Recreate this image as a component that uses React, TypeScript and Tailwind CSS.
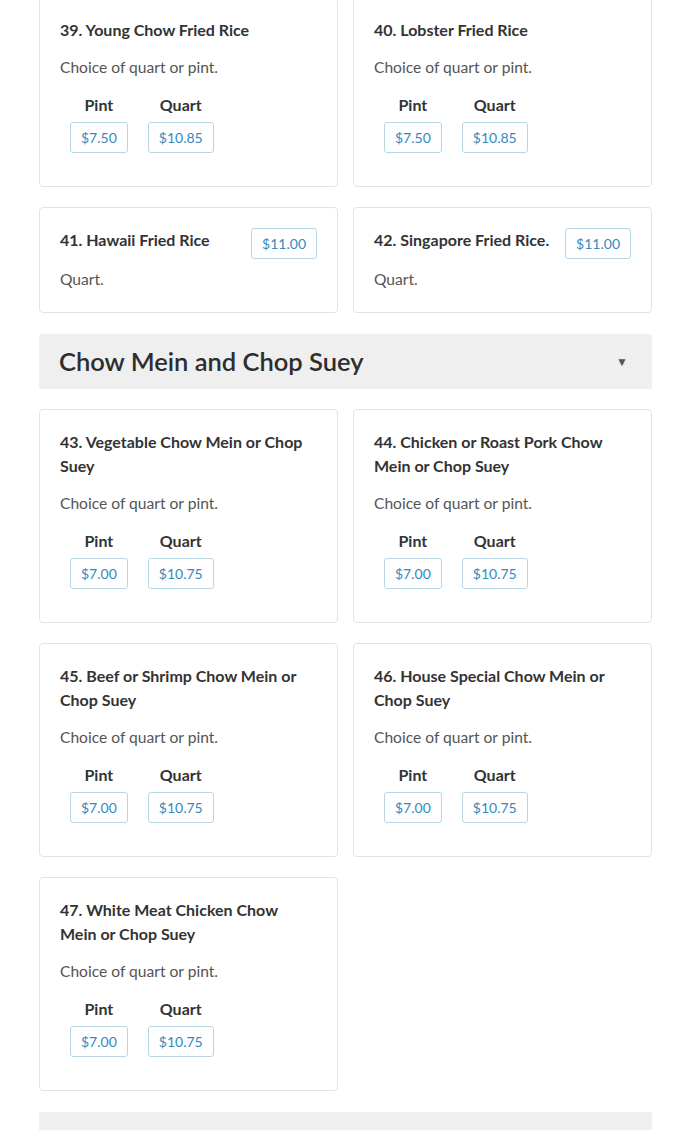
type Item = {
  name: string;
  desc: string;
  pint?: string;
  quart?: string;
  price?: string;
};

const friedRice: Item[] = [
  { name: "39. Young Chow Fried Rice", desc: "Choice of quart or pint.", pint: "$7.50", quart: "$10.85" },
  { name: "40. Lobster Fried Rice", desc: "Choice of quart or pint.", pint: "$7.50", quart: "$10.85" },
  { name: "41. Hawaii Fried Rice", desc: "Quart.", price: "$11.00" },
  { name: "42. Singapore Fried Rice.", desc: "Quart.", price: "$11.00" },
];

const chowMein: Item[] = [
  { name: "43. Vegetable Chow Mein or Chop Suey", desc: "Choice of quart or pint.", pint: "$7.00", quart: "$10.75" },
  { name: "44. Chicken or Roast Pork Chow Mein or Chop Suey", desc: "Choice of quart or pint.", pint: "$7.00", quart: "$10.75" },
  { name: "45. Beef or Shrimp Chow Mein or Chop Suey", desc: "Choice of quart or pint.", pint: "$7.00", quart: "$10.75" },
  { name: "46. House Special Chow Mein or Chop Suey", desc: "Choice of quart or pint.", pint: "$7.00", quart: "$10.75" },
  { name: "47. White Meat Chicken Chow Mein or Chop Suey", desc: "Choice of quart or pint.", pint: "$7.00", quart: "$10.75" },
];

function Price({ value }: { value: string }) {
  return (
    <span className="inline-flex h-[31px] items-center rounded-[3px] border border-[#b7d7e6] px-[10px] text-[14px] text-[#3589c0]">
      {value}
    </span>
  );
}

function Card({ item }: { item: Item }) {
  if (item.price) {
    return (
      <div className="rounded-[4px] border border-[#e3e3e3] bg-white px-5 pt-5 pb-[21px]">
        <div className="flex items-start justify-between gap-3">
          <h3 className="text-[16px] leading-6 font-bold text-[#333]">{item.name}</h3>
          <Price value={item.price} />
        </div>
        <p className="mt-[8px] text-[15.6px] leading-6 text-[#555]">{item.desc}</p>
      </div>
    );
  }
  return (
    <div className="rounded-[4px] border border-[#e3e3e3] bg-white p-5">
      <h3 className="text-[16px] leading-6 font-bold text-[#333]">{item.name}</h3>
      <p className="mt-[13px] text-[15.6px] leading-6 text-[#555]">{item.desc}</p>
      <div className="mt-[14px] mb-[13px] flex">
        <div className="flex flex-col items-center px-[10px]">
          <span className="text-[16px] leading-6 font-bold text-[#333]">Pint</span>
          <span className="mt-[5px]">
            <Price value={item.pint!} />
          </span>
        </div>
        <div className="flex flex-col items-center px-[10px]">
          <span className="text-[16px] leading-6 font-bold text-[#333]">Quart</span>
          <span className="mt-[5px]">
            <Price value={item.quart!} />
          </span>
        </div>
      </div>
    </div>
  );
}

function SectionHeader({ title }: { title: string }) {
  return (
    <div className="mt-[1px] flex h-[55px] items-center justify-between rounded-[3px] bg-[#efefef] pr-[24px] pl-5">
      <h2 className="text-[25.5px] font-semibold text-[#2d2d2d]">{title}</h2>
      <span className="text-[12px] text-[#555]">▼</span>
    </div>
  );
}

export default function App() {
  return (
    <div className="h-[1130px] overflow-hidden bg-white font-['Lato','Liberation_Sans',sans-serif]">
      <div className="-mt-[3px] flex flex-col gap-5 pr-[38px] pl-[39px]">
        <div className="grid grid-cols-2 gap-x-[15px] gap-y-5">
          {friedRice.map((it) => (
            <Card key={it.name} item={it} />
          ))}
        </div>
        <SectionHeader title="Chow Mein and Chop Suey" />
        <div className="grid grid-cols-2 items-start gap-x-[15px] gap-y-5">
          {chowMein.map((it) => (
            <Card key={it.name} item={it} />
          ))}
        </div>
        <SectionHeader title="Lo Mein and Mei Fun" />
      </div>
    </div>
  );
}
